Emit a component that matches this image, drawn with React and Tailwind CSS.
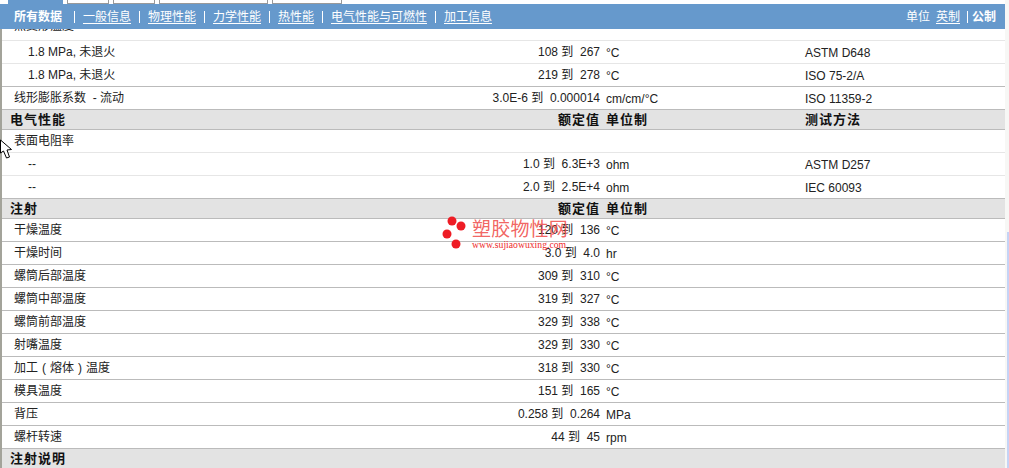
import React from "react";

const sans = "font-['Liberation_Sans','Noto_Sans_CJK_SC',sans-serif]";

const navLinks = [
  { label: "一般信息", width: "w-[48px]" },
  { label: "物理性能", width: "w-[48px]" },
  { label: "力学性能", width: "w-[48px]" },
  { label: "热性能", width: "w-[36px]" },
  { label: "电气性能与可燃性", width: "w-[96px]" },
  { label: "加工信息", width: "w-[48px]" },
];

const Tabs = () => (
  <div className="h-[4px] flex pl-[8px] gap-[4px] overflow-hidden bg-white">
    <div className="w-[55px] bg-[#6699cc]" />
    <div className="w-[42px] border-x border-b border-[#999999] bg-white" />
    <div className="w-[42px] border-x border-b border-[#999999] bg-white" />
    <div className="w-[109px] border-x border-b border-[#999999] bg-white" />
    <div className="w-[70px] border-x border-b border-[#999999] bg-white" />
  </div>
);

const Nav = () => (
  <div className="h-[25px] bg-[#6699cc] flex items-center justify-between pl-[14px] pr-[9px] text-white text-[12px]">
    <div className="flex items-center">
      <span className="font-bold w-[52px] whitespace-nowrap">所有数据</span>
      {navLinks.map((link) => (
        <React.Fragment key={link.label}>
          <span className="w-px h-[12px] bg-white mx-[8px]" />
          <a className={`${link.width} underline underline-offset-2 whitespace-nowrap`}>{link.label}</a>
        </React.Fragment>
      ))}
    </div>
    <div className="flex items-center">
      <span>单位</span>
      <a className="ml-[6px] underline underline-offset-2">英制</a>
      <span className="w-px h-[12px] bg-white ml-[7px] mr-[4px]" />
      <span className="font-bold">公制</span>
    </div>
  </div>
);

const Row = ({ name, value, unit, method, indent, light }) => (
  <div
    className={`grid grid-cols-[260px_338px_205px_1fr] items-center border-b text-[12px] text-[#222222] h-[23px] ${
      light ? "border-[#e6e6e6]" : "border-[#bbbbbb]"
    }`}
  >
    <div className={`whitespace-pre ${indent ? "pl-[26px]" : "pl-[12px]"}`}>{name}</div>
    <div className="text-right whitespace-pre">{value}</div>
    <div className="pl-[6px] translate-y-[1px]">{unit}</div>
    <div className="translate-y-[1px]">{method}</div>
  </div>
);

// the table is scrolled, only the lower part of this row still shows
const ClippedRow = ({ name }) => (
  <div className="h-[12px] flex items-end overflow-hidden border-b border-[#e6e6e6] pl-[12px] text-[12px] text-[#222222]">
    <div className="leading-[23px] mb-[2px] shrink-0">{name}</div>
  </div>
);

const Header = ({ title, value, unit, method }) => (
  <div className="grid grid-cols-[260px_338px_205px_1fr] items-center bg-[#e3e3e3] border-b border-[#bbbbbb] text-[13px] font-bold text-[#111111] tracking-[1px] h-[20px]">
    <div className="pl-[8px]">{title}</div>
    <div className="text-right">{value}</div>
    <div className="pl-[6px]">{unit}</div>
    <div>{method}</div>
  </div>
);

const Paren = ({ children }) => <span className="inline-block w-[12px] text-center">{children}</span>;

const injection = [
  ["干燥温度", "120 到  136", "°C"],
  ["干燥时间", "3.0 到  4.0", "hr"],
  ["螺筒后部温度", "309 到  310", "°C"],
  ["螺筒中部温度", "319 到  327", "°C"],
  ["螺筒前部温度", "329 到  338", "°C"],
  ["射嘴温度", "329 到  330", "°C"],
  [<>加工<Paren>(</Paren>熔体<Paren>)</Paren>温度</>, "318 到  330", "°C"],
  ["模具温度", "151 到  165", "°C"],
  ["背压", "0.258 到  0.264", "MPa"],
  ["螺杆转速", "44 到  45", "rpm"],
];

const Watermark = () => (
  <div className="absolute left-[442px] top-[216px] w-[130px] h-[36px]">
    <svg className="absolute left-0 top-0" width="28" height="36" viewBox="0 0 28 36">
      <circle cx="10" cy="5" r="4.5" fill="#ee1c25" />
      <circle cx="19" cy="10" r="4.5" fill="#ee1c25" />
      <circle cx="5" cy="18" r="4.5" fill="#ee1c25" />
      <circle cx="14" cy="28" r="4.5" fill="#ee1c25" />
    </svg>
    <div className={`absolute left-[30px] top-[2px] text-[19px] leading-[24px] tracking-[0.2px] whitespace-nowrap text-[#f0524f]/90 ${sans}`}>
      塑胶物性网
    </div>
    <div className="absolute left-[30px] top-[24px] text-[9.7px] leading-[10px] whitespace-nowrap text-[#ee2a2a] font-['Liberation_Serif',serif]">
      www.sujiaowuxing.com
    </div>
  </div>
);

const Cursor = () => (
  <svg className="absolute left-0 top-[139px]" width="13" height="22" viewBox="0 0 13 22">
    <path
      d="M0.5 1 L0.5 14 L3.5 12 L6.5 19 L9.5 18 L7 11 L11.5 10.5 Z"
      fill="#ffffff"
      stroke="#000000"
      strokeWidth="1"
    />
  </svg>
);

export default function App() {
  return (
    <div className={`relative w-[1009px] h-[468px] overflow-hidden bg-white flex ${sans}`}>
      <div className="w-[1005px] flex flex-col">
        <Tabs />
        <Nav />
        <div className="flex-1 border-l-2 border-[#a3a39a] overflow-hidden">
          <ClippedRow name="热变形温度" />
          <Row name="1.8 MPa, 未退火" value="108 到  267" unit="°C" method="ASTM D648" indent light />
          <Row name="1.8 MPa, 未退火" value="219 到  278" unit="°C" method="ISO 75-2/A" indent />
          <Row name="线形膨胀系数  - 流动" value="3.0E-6 到  0.000014" unit="cm/cm/°C" method="ISO 11359-2" />
          <Header title="电气性能" value="额定值" unit="单位制" method="测试方法" />
          <Row name="表面电阻率" light />
          <Row name="--" value="1.0 到  6.3E+3" unit="ohm" method="ASTM D257" indent light />
          <Row name="--" value="2.0 到  2.5E+4" unit="ohm" method="IEC 60093" indent />
          <Header title="注射" value="额定值" unit="单位制" />
          {injection.map(([name, value, unit], i) => (
            <Row key={i} name={name} value={value} unit={unit} />
          ))}
          <Header title="注射说明" />
        </div>
      </div>
      <div className="w-[4px] bg-[#f7f7f5] pt-[232px] pl-[2px]">
        <div className="w-[2px] h-full bg-[#c5d3f5]" />
      </div>
      <Watermark />
      <Cursor />
    </div>
  );
}
